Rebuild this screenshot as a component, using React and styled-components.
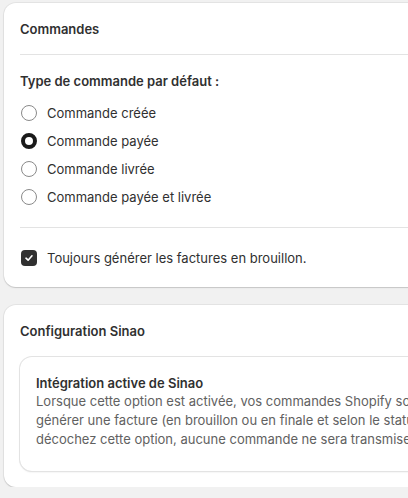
import React from "react";
import styled, { createGlobalStyle } from "styled-components";

const Global = createGlobalStyle`
  html, body { margin: 0; padding: 0; background: #f1f1f1; overflow: hidden; }
  body { font-family: Inter, "Noto Sans", sans-serif; color: #303030; -webkit-font-smoothing: antialiased; }
`;

const Page = styled.div`
  display: flex;
  flex-direction: column;
  gap: 18px;
  padding: 3px 0 0 4px;
  width: 720px;
`;

const Card = styled.section`
  background: #fff;
  border-radius: 12px;
  box-shadow: 0 1px 0 0 rgba(26, 26, 26, 0.07), 0 0 0 1px rgba(0, 0, 0, 0.05), 0 1px 2px rgba(0,0,0,0.08);
  padding: ${(p) => p.$pad || "0"};
`;

const Section = styled.div`
  padding: ${(p) => p.$pad};
  display: flex;
  flex-direction: column;
  gap: ${(p) => p.$gap || "0"};
`;

const Divider = styled.hr`
  margin: 0 0 0 16px;
  border: 0;
  border-top: 1px solid #e3e3e3;
`;

const Heading = styled.h2`
  margin: 0;
  font-size: 13px;
  line-height: 20px;
  font-weight: 600;
  color: #303030;
`;

const Label = styled.div`
  font-size: 13px;
  line-height: 20px;
  font-weight: 600;
  color: #303030;
  margin-bottom: 4px;
`;

const Option = styled.label`
  display: flex;
  align-items: center;
  gap: 10px;
  height: 20px;
  font-size: 13px;
  color: #303030;
  padding-left: 1px;
`;

const Radio = styled.span`
  box-sizing: border-box;
  width: 16px;
  height: 16px;
  border-radius: 50%;
  border: ${(p) => (p.$checked ? "4.5px solid #1a1a1a" : "1px solid #8a8a8a")};
  background: #fff;
  flex: none;
`;

const Check = styled.span`
  box-sizing: border-box;
  width: 16px;
  height: 16px;
  border-radius: 4px;
  background: #303030;
  display: flex;
  align-items: center;
  justify-content: center;
  flex: none;
`;

const InnerBox = styled.div`
  margin-top: 16px;
  border-radius: 12px;
  box-shadow: 0 0 0 1px #e3e3e3, 0 1px 2px rgba(0,0,0,0.12);
  padding: 16px 16px 22px 16px;
`;

const InnerTitle = styled.div`
  font-size: 13px;
  line-height: 20px;
  font-weight: 600;
  color: #303030;
`;

const InnerText = styled.p`
  margin: -1px 0 0;
  font-size: 13px;
  line-height: 19px;
  color: #616161;
  white-space: nowrap;
`;

const options = [
  { label: "Commande créée", checked: false },
  { label: "Commande payée", checked: true },
  { label: "Commande livrée", checked: false },
  { label: "Commande payée et livrée", checked: false },
];

export default function App() {
  return (
    <>
      <Global />
      <Page>
        <Card>
          <Section $pad="16px 16px 15px">
            <Heading>Commandes</Heading>
          </Section>
          <Divider />
          <Section $pad="16px 16px 20px" $gap="8px">
            <Label>Type de commande par défaut :</Label>
            {options.map((o) => (
              <Option key={o.label}>
                <Radio $checked={o.checked} />
                {o.label}
              </Option>
            ))}
          </Section>
          <Divider />
          <Section $pad="20px 16px 19px">
            <Option>
              <Check>
                <svg width="10" height="10" viewBox="0 0 10 10">
                  <path d="M2 5.2 L4.1 7.2 L8 2.8" fill="none" stroke="#fff" strokeWidth="1.6" strokeLinecap="round" strokeLinejoin="round" />
                </svg>
              </Check>
              Toujours générer les factures en brouillon.
            </Option>
          </Section>
        </Card>
        <Card $pad="16px">
          <Heading>Configuration Sinao</Heading>
          <InnerBox>
            <InnerTitle>Intégration active de Sinao</InnerTitle>
            <InnerText>
              Lorsque cette option est activée, vos commandes Shopify sont automatiquement transmises à Sinao pour
              <br />
              générer une facture (en brouillon ou en finale et selon le statut de commande choisi). Si vous
              <br />
              décochez cette option, aucune commande ne sera transmise à Sinao.
            </InnerText>
          </InnerBox>
        </Card>
      </Page>
    </>
  );
}
